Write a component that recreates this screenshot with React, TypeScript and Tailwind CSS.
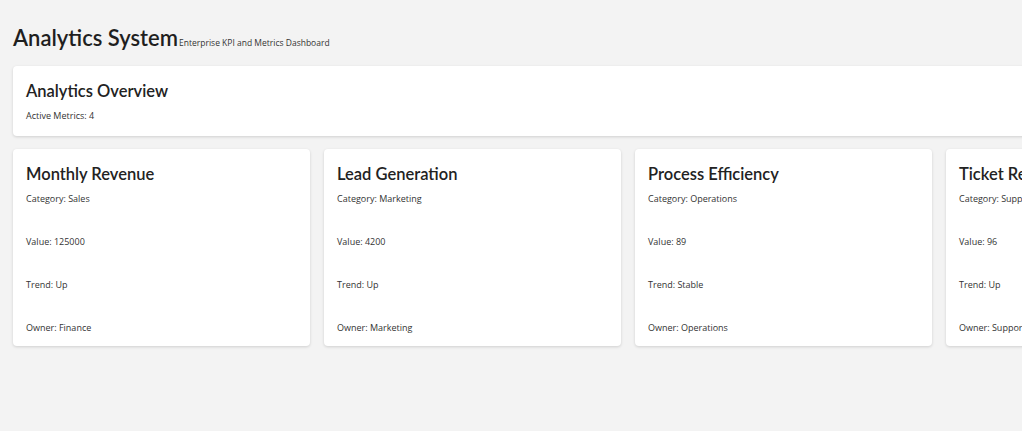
import React from "react";

const metrics = [
  { name: "Monthly Revenue", category: "Sales", value: "125000", trend: "Up", owner: "Finance" },
  { name: "Lead Generation", category: "Marketing", value: "4200", trend: "Up", owner: "Marketing" },
  { name: "Process Efficiency", category: "Operations", value: "89", trend: "Stable", owner: "Operations" },
  { name: "Ticket Resolution", category: "Support", value: "96", trend: "Up", owner: "Support" },
];

export default function App() {
  return (
    <div className="w-screen h-screen overflow-hidden bg-[#f3f3f3] font-['Open_Sans',sans-serif] text-[#222]">
      <div className="w-max px-[13px]">
        <div className="flex items-baseline pt-[24px]">
          <h1 className="font-['Lato',sans-serif] text-[22px] leading-[28px] font-semibold text-[#1f1f1f]">Analytics System</h1>
          <span className="ml-[1px] text-[8.5px] text-[#333]">Enterprise KPI and Metrics Dashboard</span>
        </div>
        <div className="mt-[14px] bg-white rounded-[4px] shadow-[0_1px_3px_rgba(0,0,0,0.15)] px-[13px] pt-[14px] pb-[14px]">
          <h2 className="font-['Lato',sans-serif] font-semibold text-[16.5px] leading-[22px] text-[#222]">Analytics Overview</h2>
          <p className="mt-[8px] text-[9px] leading-[12px] text-[#333]">Active Metrics: 4</p>
        </div>
        <div className="mt-[13px] flex gap-[14px]">
          {metrics.map((m) => (
            <div
              key={m.name}
              className="w-[297px] shrink-0 bg-white rounded-[4px] shadow-[0_1px_3px_rgba(0,0,0,0.15)] px-[13px] pt-[14px] pb-[12px]"
            >
              <h3 className="font-['Lato',sans-serif] font-semibold text-[16.5px] leading-[22px] text-[#222]">{m.name}</h3>
              <div className="mt-[8px] flex flex-col gap-[31px] text-[9px] leading-[12px] text-[#333]">
                <p>Category: {m.category}</p>
                <p>Value: {m.value}</p>
                <p>Trend: {m.trend}</p>
                <p>Owner: {m.owner}</p>
              </div>
            </div>
          ))}
        </div>
      </div>
    </div>
  );
}
